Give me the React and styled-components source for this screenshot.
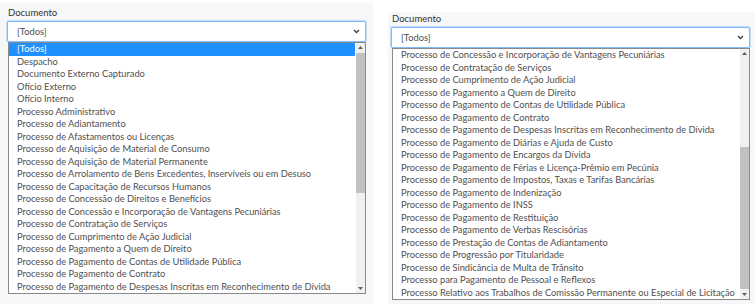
import React from 'react'
import styled, { createGlobalStyle } from 'styled-components'

const GlobalStyle = createGlobalStyle`
  body {
    margin: 0;
    background: #fff;
    font-family: Lato, "Liberation Sans", sans-serif;
  }
`

const leftItems = [
  '[Todos]',
  'Despacho',
  'Documento Externo Capturado',
  'Ofício Externo',
  'Ofício Interno',
  'Processo Administrativo',
  'Processo de Adiantamento',
  'Processo de Afastamentos ou Licenças',
  'Processo de Aquisição de Material de Consumo',
  'Processo de Aquisição de Material Permanente',
  'Processo de Arrolamento de Bens Excedentes, Inservíveis ou em Desuso',
  'Processo de Capacitação de Recursos Humanos',
  'Processo de Concessão de Direitos e Benefícios',
  'Processo de Concessão e Incorporação de Vantagens Pecuniárias',
  'Processo de Contratação de Serviços',
  'Processo de Cumprimento de Ação Judicial',
  'Processo de Pagamento a Quem de Direito',
  'Processo de Pagamento de Contas de Utilidade Pública',
  'Processo de Pagamento de Contrato',
  'Processo de Pagamento de Despesas Inscritas em Reconhecimento de Dívida',
]

const rightItems = [
  'Processo de Concessão e Incorporação de Vantagens Pecuniárias',
  'Processo de Contratação de Serviços',
  'Processo de Cumprimento de Ação Judicial',
  'Processo de Pagamento a Quem de Direito',
  'Processo de Pagamento de Contas de Utilidade Pública',
  'Processo de Pagamento de Contrato',
  'Processo de Pagamento de Despesas Inscritas em Reconhecimento de Dívida',
  'Processo de Pagamento de Diárias e Ajuda de Custo',
  'Processo de Pagamento de Encargos da Dívida',
  'Processo de Pagamento de Férias e Licença-Prêmio em Pecúnia',
  'Processo de Pagamento de Impostos, Taxas e Tarifas Bancárias',
  'Processo de Pagamento de Indenização',
  'Processo de Pagamento de INSS',
  'Processo de Pagamento de Restituição',
  'Processo de Pagamento de Verbas Rescisórias',
  'Processo de Prestação de Contas de Adiantamento',
  'Processo de Progressão por Titularidade',
  'Processo de Sindicância de Multa de Trânsito',
  'Processo para Pagamento de Pessoal e Reflexos',
  'Processo Relativo aos Trabalhos de Comissão Permanente ou Especial de Licitação',
]

function Chevron() {
  return (
    <svg width="7" height="5" viewBox="0 0 7 5">
      <path d="M1 1 L3.5 3.6 L6 1" fill="none" stroke="#444" strokeWidth="1.4" />
    </svg>
  )
}

function Arrow({ down }) {
  return (
    <svg width="5" height="3" viewBox="0 0 5 3">
      <path d={down ? 'M0 0 L5 0 L2.5 3 Z' : 'M0 3 L5 3 L2.5 0 Z'} fill="#606060" />
    </svg>
  )
}

function Dropdown({ items, selected, thumb }) {
  return (
    <>
      <Label>Documento</Label>
      <SelectBox>
        <span>[Todos]</span>
        <Chevron />
      </SelectBox>
      <ListBox>
        <Options>
          {items.map((item) => (
            <Option key={item} $selected={item === selected}>
              {item}
            </Option>
          ))}
        </Options>
        <Scrollbar>
          <ScrollArrow><Arrow /></ScrollArrow>
          <Track>
            <Gap style={{ flexGrow: thumb[0] }} />
            <Thumb style={{ flexGrow: thumb[1] }} />
            <Gap style={{ flexGrow: thumb[2] }} />
          </Track>
          <ScrollArrow><Arrow down /></ScrollArrow>
        </Scrollbar>
      </ListBox>
    </>
  )
}

export default function App() {
  return (
    <Page>
      <GlobalStyle />
      <Panel $top={3} $padL={7} $padR={7} $padT={4} style={{ width: 373 }}>
        <Dropdown items={leftItems} selected="[Todos]" thumb={[1, 139, 91]} />
      </Panel>
      <Panel $top={12} $padL={3} $padR={5} $padT={1} $grow>
        <Dropdown items={rightItems} thumb={[89, 143, 1]} />
      </Panel>
    </Page>
  )
}

const Page = styled.div`
  display: flex;
  gap: 15px;
  width: 755px;
  height: 304px;
  overflow: hidden;
  align-items: flex-start;
`

const Panel = styled.div`
  box-sizing: border-box;
  margin-top: ${(p) => p.$top}px;
  padding: ${(p) => p.$padT}px ${(p) => p.$padR}px 0 ${(p) => p.$padL}px;
  height: ${(p) => 304 - p.$top}px;
  background: #f6f7f9;
  flex: ${(p) => (p.$grow ? '1' : 'none')};
  display: flex;
  flex-direction: column;
`

const Label = styled.div`
  font-size: 9.5px;
  line-height: 12px;
  color: #333;
  padding-left: 1px;
  margin-bottom: 2px;
`

const SelectBox = styled.div`
  box-sizing: border-box;
  height: 21px;
  background: #fff;
  border: 1px solid #80bdff;
  border-radius: 2px;
  box-shadow: 0 0 0 1px rgba(0, 123, 255, 0.2);
  display: flex;
  align-items: center;
  justify-content: space-between;
  padding: 0 5px 0 9px;
  font-size: 9.3px;
  color: #495057;
`

const ListBox = styled.div`
  display: flex;
  margin-left: 1px;
  border: 1px solid #8a8a8a;
  background: #fff;
  height: 250px;
`

const Options = styled.ul`
  list-style: none;
  margin: 0;
  padding: 0;
  flex: 1;
  overflow: hidden;
`

const Option = styled.li`
  height: 12.5px;
  line-height: 12.5px;
  padding-left: 8px;
  font-size: 9.3px;
  white-space: nowrap;
  color: ${(p) => (p.$selected ? '#fff' : '#505050')};
  background: ${(p) => (p.$selected ? '#1e90ff' : 'transparent')};
`

const Scrollbar = styled.div`
  width: 9px;
  display: flex;
  flex-direction: column;
  background: #f0f0f0;
  border-left: 1px solid #fff;
`

const ScrollArrow = styled.div`
  height: 9px;
  display: flex;
  align-items: center;
  justify-content: center;
`

const Track = styled.div`
  flex: 1;
  display: flex;
  flex-direction: column;
`

const Gap = styled.div`
  flex-basis: 0;
`

const Thumb = styled.div`
  flex-basis: 0;
  background: #c1c1c1;
`
